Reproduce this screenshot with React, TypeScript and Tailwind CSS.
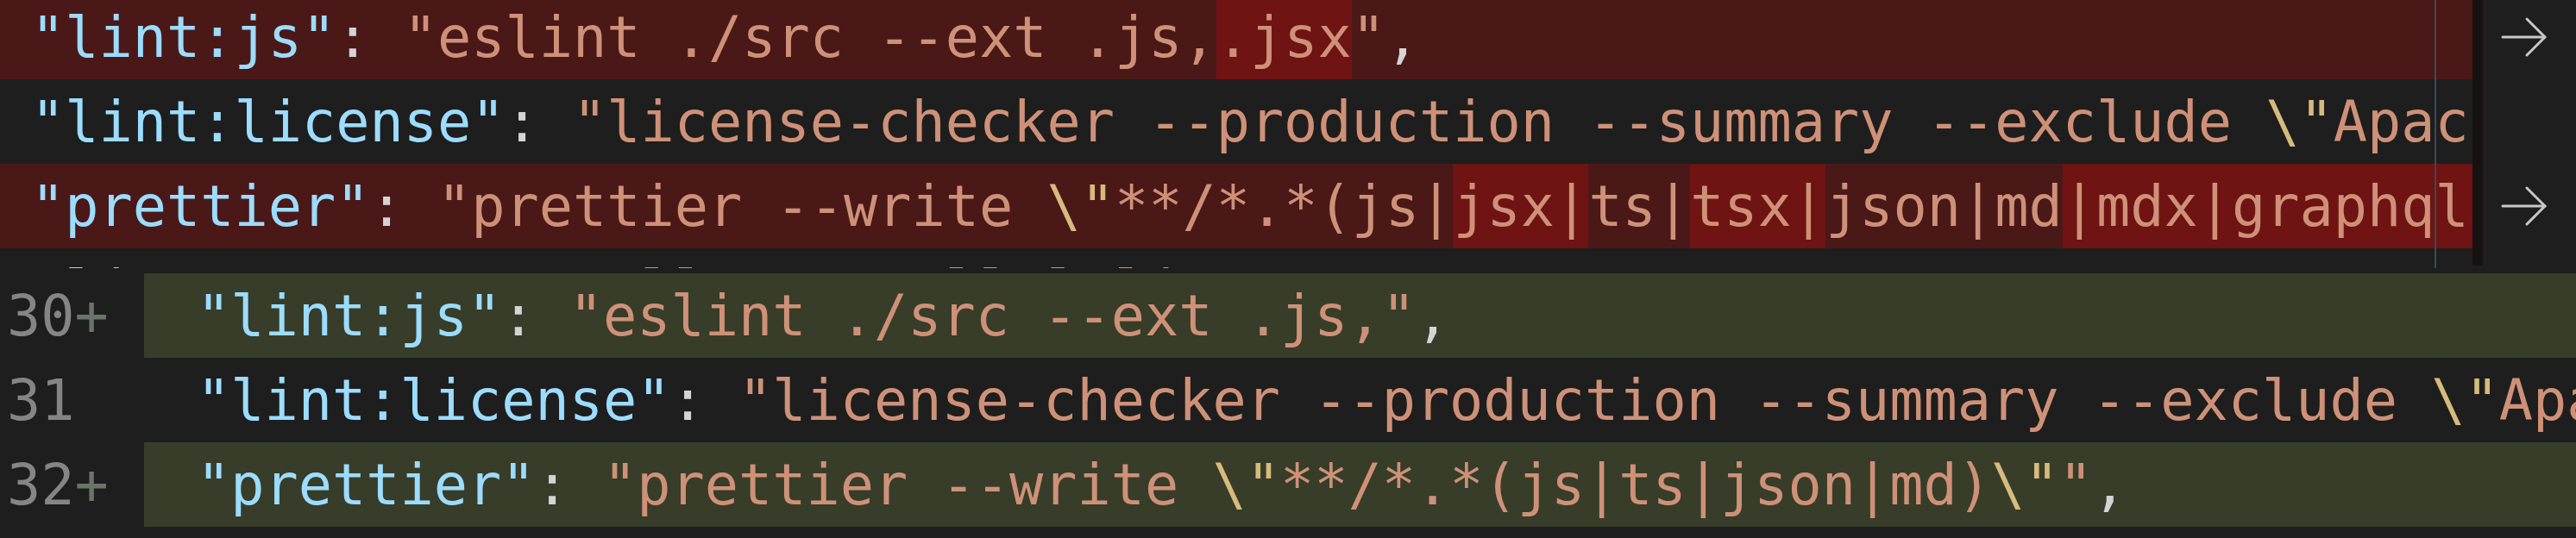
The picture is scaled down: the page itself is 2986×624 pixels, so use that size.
import React from 'react';

type Seg = { t: string; c: string; hl?: boolean };

const KEY = 'text-[#9cdcfe]';
const STR = 'text-[#ce9178]';
const PUN = 'text-[#d4d4d4]';
const ESC = 'text-[#d7ba7d]';

const removed: { segs: Seg[]; kind: 'del' | 'plain'; arrow?: boolean }[] = [
    {
        kind: 'del',
        arrow: true,
        segs: [
            { t: '"lint:js"', c: KEY },
            { t: ': ', c: PUN },
            { t: '"eslint ./src --ext .js,', c: STR },
            { t: '.jsx', c: STR, hl: true },
            { t: '"', c: STR },
            { t: ',', c: PUN },
        ],
    },
    {
        kind: 'plain',
        segs: [
            { t: '"lint:license"', c: KEY },
            { t: ': ', c: PUN },
            { t: '"license-checker --production --summary --exclude ', c: STR },
            { t: '\\"', c: ESC },
            { t: 'Apache-2.0', c: STR },
            { t: '\\"', c: ESC },
            { t: '"', c: STR },
            { t: ',', c: PUN },
        ],
    },
    {
        kind: 'del',
        arrow: true,
        segs: [
            { t: '"prettier"', c: KEY },
            { t: ': ', c: PUN },
            { t: '"prettier --write ', c: STR },
            { t: '\\"', c: ESC },
            { t: '**/*.*(js|', c: STR },
            { t: 'jsx|', c: STR, hl: true },
            { t: 'ts|', c: STR },
            { t: 'tsx|', c: STR, hl: true },
            { t: 'json|md', c: STR },
            { t: '|mdx|graphql|yml)\\""', c: STR, hl: true },
            { t: ',', c: PUN },
        ],
    },
    {
        kind: 'plain',
        segs: [
            { t: '"lint"', c: KEY },
            { t: ': ', c: PUN },
            { t: '"npm-run-all --parallel lint:*"', c: STR },
            { t: ',', c: PUN },
        ],
    },
];

const added: { num: string; plus: boolean; segs: Seg[] }[] = [
    {
        num: '30',
        plus: true,
        segs: [
            { t: '"lint:js"', c: KEY },
            { t: ': ', c: PUN },
            { t: '"eslint ./src --ext .js,"', c: STR },
            { t: ',', c: PUN },
        ],
    },
    {
        num: '31',
        plus: false,
        segs: [
            { t: '"lint:license"', c: KEY },
            { t: ': ', c: PUN },
            { t: '"license-checker --production --summary --exclude ', c: STR },
            { t: '\\"', c: ESC },
            { t: 'Apache-2.0', c: STR },
            { t: '\\"', c: ESC },
            { t: '"', c: STR },
            { t: ',', c: PUN },
        ],
    },
    {
        num: '32',
        plus: true,
        segs: [
            { t: '"prettier"', c: KEY },
            { t: ': ', c: PUN },
            { t: '"prettier --write ', c: STR },
            { t: '\\"', c: ESC },
            { t: '**/*.*(js|ts|json|md)', c: STR },
            { t: '\\"', c: ESC },
            { t: '"', c: STR },
            { t: ',', c: PUN },
        ],
    },
];

const Code: React.FC<{ segs: Seg[] }> = ({ segs }) => (
    <>
        {segs.map((s, i) =>
            s.hl ? (
                <span key={i} className={`inline-block h-[98px] bg-[#6f1313] ${s.c}`}>
                    {s.t}
                </span>
            ) : (
                <span key={i} className={s.c}>
                    {s.t}
                </span>
            )
        )}
    </>
);

const Arrow: React.FC = () => (
    <svg width="56" height="48" viewBox="0 0 56 48" fill="none" stroke="#c8c8c8" strokeWidth="3" strokeLinecap="round" strokeLinejoin="round">
        <path d="M3 24H52" />
        <path d="M31 3L52 24L31 45" />
    </svg>
);

export default function App() {
    return (
        <div className="w-[2986px] h-[624px] overflow-hidden bg-[#1e1e1e] font-['DejaVu_Sans_Mono','Liberation_Mono',monospace] text-[65.2px] leading-[98px] whitespace-pre">
            {/* removed side */}
            <div className="flex h-[317px] overflow-hidden">
                <div className="relative w-[2866px] h-[311px] flex-none overflow-hidden">
                    <div className="-mt-[6px]">
                        {removed.map((line, i) => (
                            <div
                                key={i}
                                className={`h-[98px] pl-[36px] ${line.kind === 'del' ? 'bg-[#4b1818]' : 'bg-[#1e1e1e]'}`}
                            >
                                <Code segs={line.segs} />
                            </div>
                        ))}
                    </div>
                    <div className="absolute left-[2822px] top-0 h-[311px] w-[2px] bg-[#3b4a55]" />
                </div>
                <div className="w-[12px] h-[308px] flex-none bg-[#161212]" />
                <div className="flex-1 -mt-[6px]">
                    {removed.map((line, i) => (
                        <div key={i} className="h-[98px] flex items-center pl-[20px]">
                            {line.arrow && <Arrow />}
                        </div>
                    ))}
                </div>
            </div>

            {/* added side */}
            <div className="flex flex-col">
                {added.map((line, i) => (
                    <div key={i} className="flex h-[98px]">
                        <div className="w-[167px] flex-none pl-[8px] text-[#858585]">
                            {line.num}
                            {line.plus && <span className="text-[#6a756a]">+</span>}
                        </div>
                        <div className={`flex-1 overflow-hidden pl-[61px] ${line.plus ? 'bg-[#373d29]' : 'bg-[#1e1e1e]'}`}>
                            <Code segs={line.segs} />
                        </div>
                    </div>
                ))}
            </div>
        </div>
    );
}
